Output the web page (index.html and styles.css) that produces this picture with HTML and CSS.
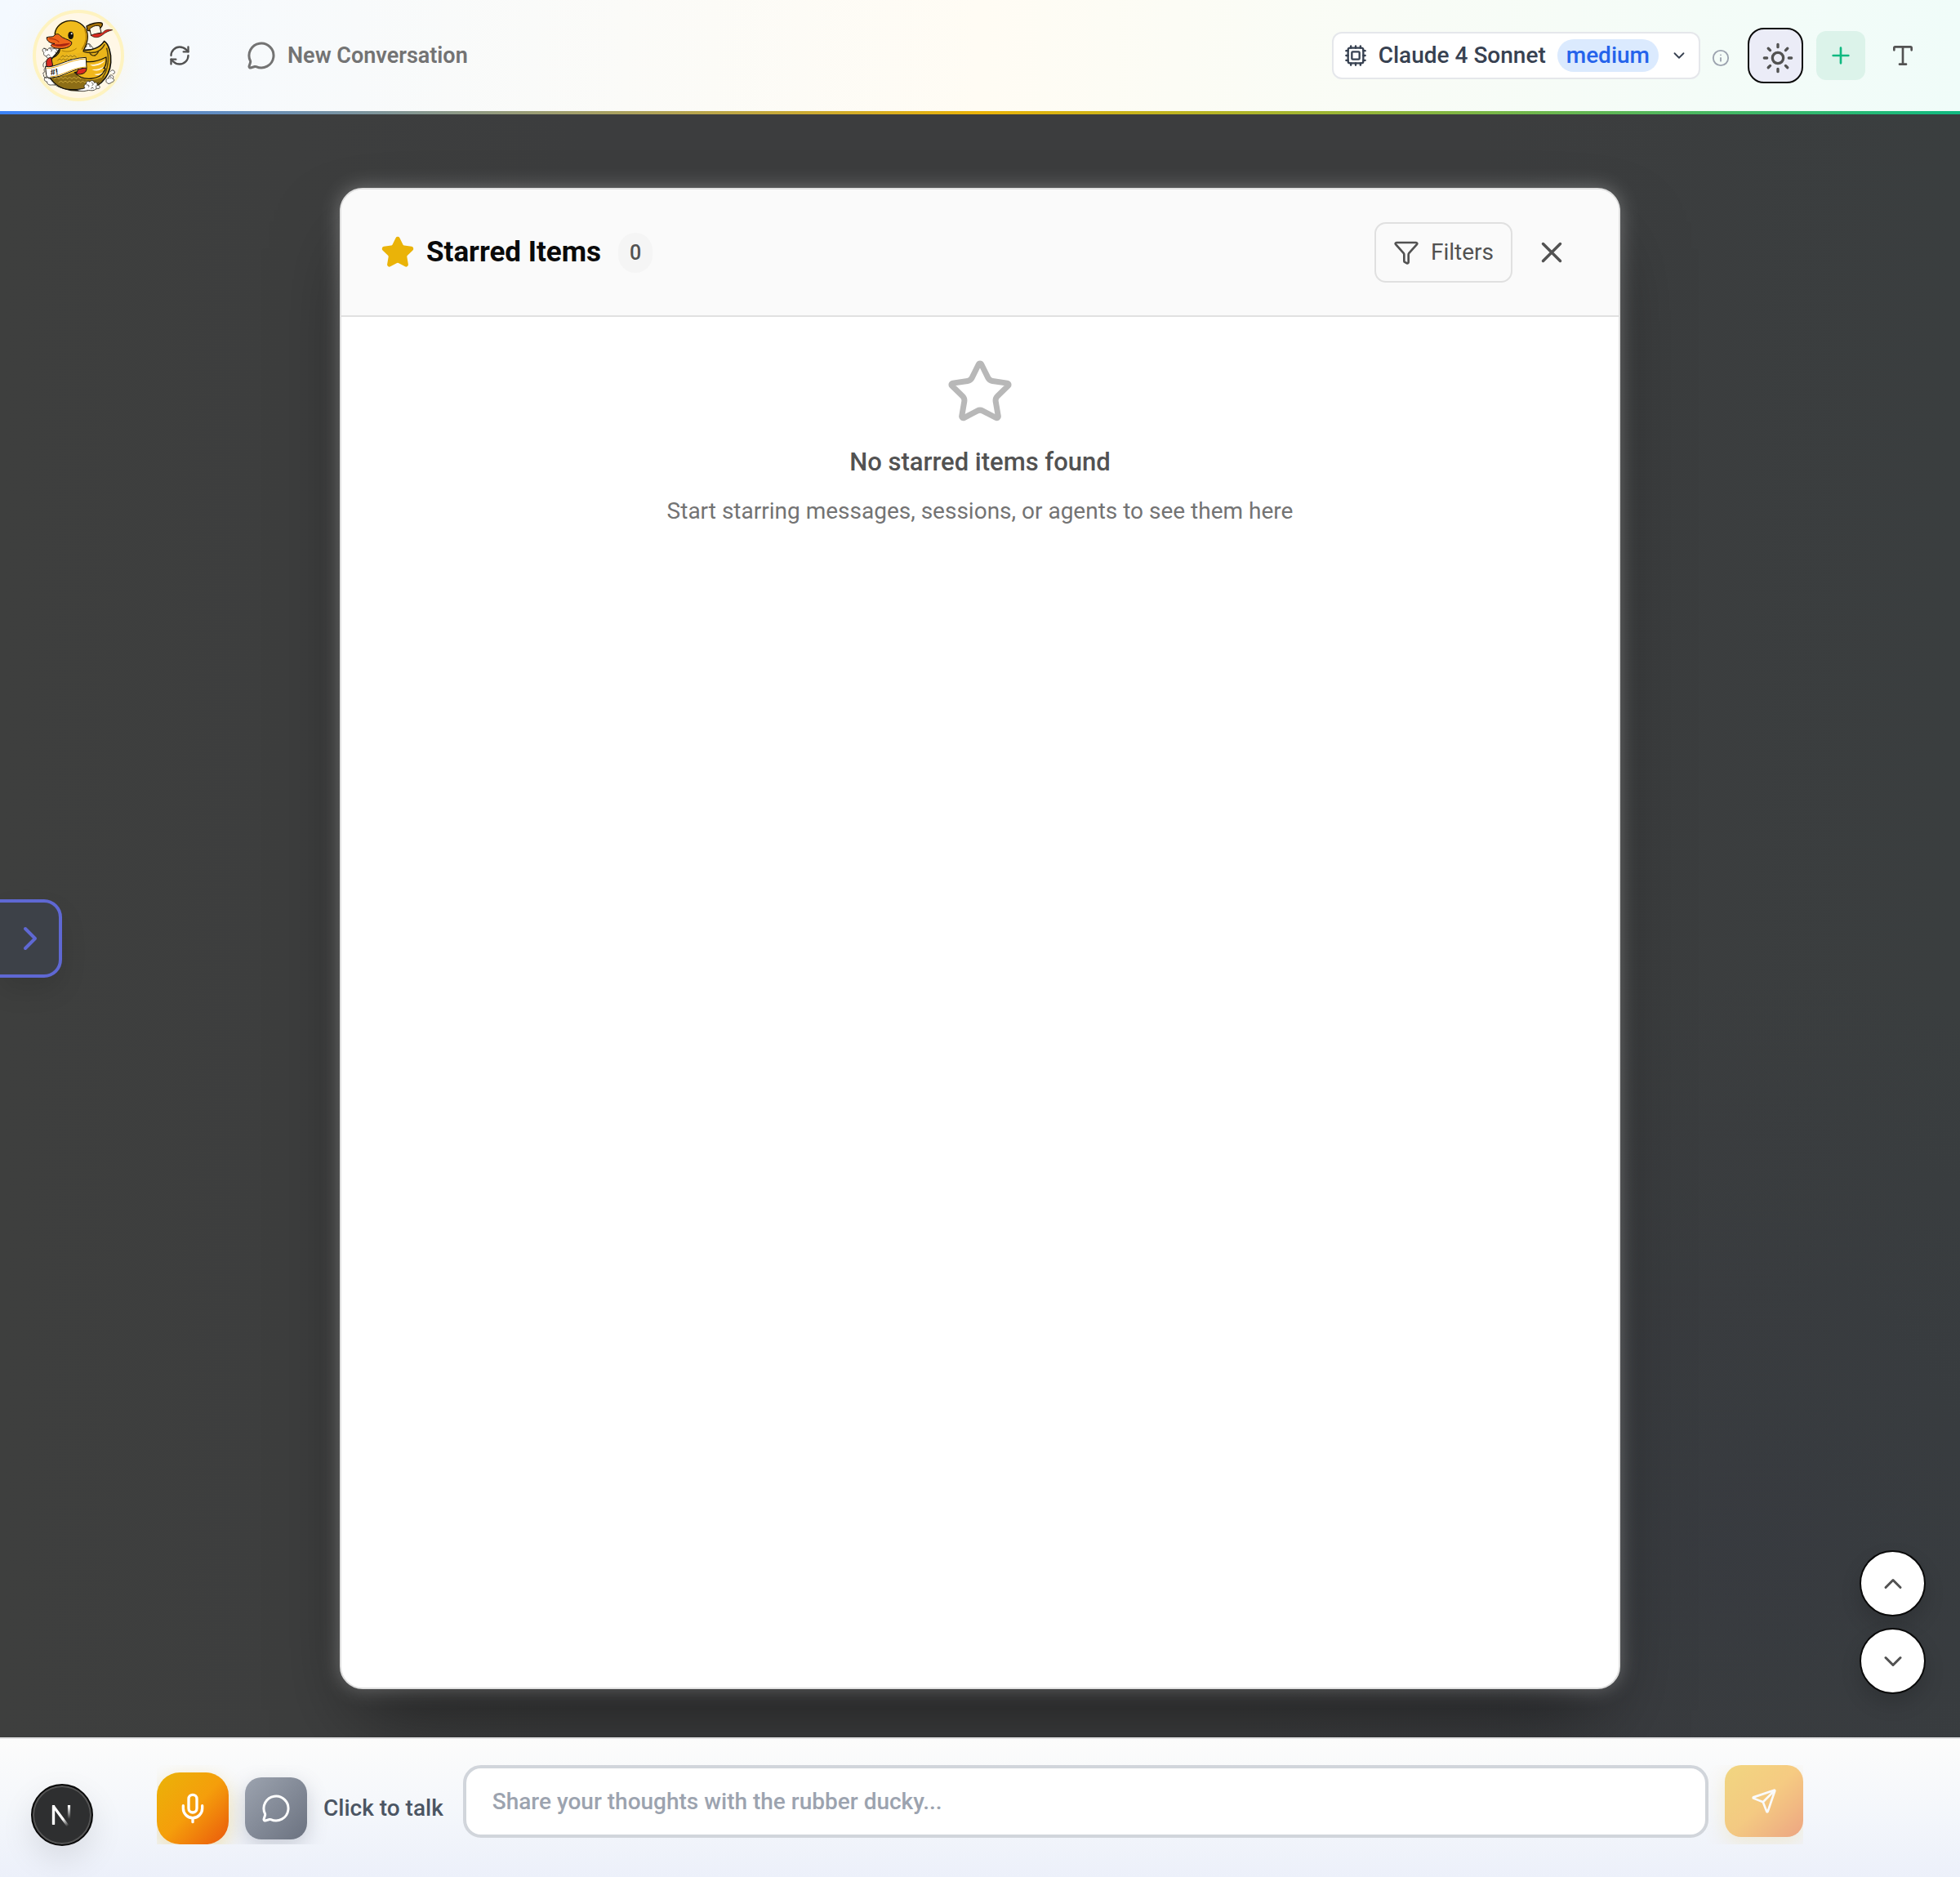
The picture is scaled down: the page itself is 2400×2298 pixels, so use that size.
FILE: index.html
```html
<!DOCTYPE html>
<html lang="en">
<head>
<meta charset="utf-8">
<meta name="viewport" content="width=device-width, initial-scale=1">
<title>Starred Items</title>
<link rel="stylesheet" href="styles.css">
</head>
<body>
<header class="topbar">
  <a class="logo" href="#" aria-label="Home">
    <svg viewBox="42 48 312 312" aria-hidden="true">
      <!-- waves behind the duck -->
      <g fill="#fff" stroke="#2e2a22" stroke-width="2.5" stroke-linecap="round">
        <path d="M102 214c-10 4-22 0-22-8-8 0-12-8-8-13-6-2-8-12-2-15 6-2 12 2 14 8 0-10 14-14 20-6 8-4 18 2 16 10 8 0 12 8 8 14z"/>
        <path d="M72 178c6 0 8 6 5 9m16-8c7 0 9 7 5 10m15 2c5 2 5 8 1 10m-31 4c1-6 9-6 10-1"/>
        <path d="M84 286c-6 2-14-2-14-9m4-13c-6 0-8 8-3 10M100 312c-10 2-18-4-17-12-8 0-13-8-8-15 5-5 13-2 14 4 8-3 15 3 13 10 8-1 14 5 12 12z"/>
        <path d="M76 226c-6 4-10 12-6 20m8 2c-6 2-8 10-4 14"/>
        <path d="M222 182c-4-6 0-12 6-10-2-8 4-14 10-11 6 2 7 8 4 11 6-3 12 2 9 8z"/>
        <path d="M234 162c6 0 8 6 4 8"/>
        <path d="M300 300c-2-8 4-14 10-12-2-8 4-14 10-12 8 2 8 10 3 13 8 0 8 10 0 12-6 2-8 8-16 6z"/>
        <path d="M316 262c4-6 12-6 14 0 4 4 0 10-5 9m-11 9c4 0 6 5 3 8"/>
      </g>
      <!-- streamer -->
      <path d="M228 96c14-8 40-16 54-12 8 2 4 14-6 22-14 12-30 8-44 6z" fill="#a87408" stroke="#1b1405" stroke-width="4"/>
      <path d="M240 106c12-12 26-14 36-10l6 24c-12 2-26 6-36 10z" fill="#fff7e6" stroke="#1b1405" stroke-width="3"/>
      <path d="M245 130c16-12 38-2 46-14 8-8 20-8 32-6-14 4-24 8-36 18-14 12-34 12-42 2z" fill="#dc2a20" stroke="#1b1405" stroke-width="2"/>
      <!-- body and tail -->
      <path d="M128 180C118 206 92 212 85 242c-6 44 34 91 112 91 72 0 116-46 120-104 2-34-8-68-24-78-14 22-40 34-80 34z" fill="#eab51a" stroke="#15130d" stroke-width="5"/>
      <path d="M88 268c30 24 60 8 96-2 18 32 70 36 112 12-16 36-54 55-99 55-58 0-96-28-109-65z" fill="#8c6d16"/>
      <path d="M104 306c48 34 126 24 172-6-22 26-48 33-79 33-40 0-74-9-93-27z" fill="#15130d"/>
      <path d="M110 290q8-12 16 0 8-12 16 0 8-12 16 0 8-12 16 0 8-12 16 0 8-12 16 0 8-12 16 0 8-12 16 0M126 304q8-12 16 0 8-12 16 0 8-12 16 0 8-12 16 0 8-12 16 0 8-12 16 0 8-12 16 0M144 216q7-12 14 0 7-12 14 0 7-12 14 0M128 224q7-12 14 0M152 206q7-10 14 0 7-10 14 0 7-10 14 0" fill="none" stroke="#e9c14a" stroke-width="2"/>
      <path d="M122 222q7-12 14 0 7-12 14 0 7-12 14 0 7-12 14 0M134 210q7-12 14 0 7-12 14 0 7-12 14 0 7-12 14 0" fill="none" stroke="#6e540c" stroke-width="2"/>
      <path d="M218 190c14 4 40 6 54-2-4 10-8 14-16 16m-18-12c4 8 12 14 22 12m34-40c-6 12-14 20-24 24" fill="none" stroke="#4b390a" stroke-width="4"/>
      <path d="M302 178c10 34 6 76-14 104" fill="none" stroke="#5d4a12" stroke-width="5" stroke-dasharray="3 3"/>
      <!-- head -->
      <path d="M130 184c-22-22-28-60-12-84 24-36 82-34 104 2 20 34 8 62-4 86-24 14-60 10-88-4z" fill="#f0bb1c"/>
      <path d="M112 126C112 98 140 76 170 76c34 0 62 26 62 58 0 24-10 38-16 54M130 182c-2 12-10 22-22 28" fill="none" stroke="#15130d" stroke-width="4"/>
      <path d="M222 106c10 26 4 54-10 74" fill="none" stroke="#b98509" stroke-width="6"/>
      <path d="M138 186c20 6 36 4 52-8" fill="none" stroke="#a6780a" stroke-width="3"/>
      <ellipse cx="170" cy="130" rx="10" ry="14" fill="#15130d"/>
      <circle cx="173" cy="124" r="3" fill="#fff"/>
      <!-- beak -->
      <path d="M82 138c8-6 20 0 26-6 6-8 16-10 22-2 10 12 32 14 43 24 4 16-20 26-44 24-18 0-30-4-32-12 4-4 10-4 14-6-16 0-32-10-29-22z" fill="#ee651b" stroke="#15130d" stroke-width="3"/>
      <path d="M98 160c20 8 50-2 70-2-14 16-52 14-68 6z" fill="#a62312"/>
      <path d="M92 142c12 0 26 2 34 12" fill="none" stroke="#b7330d" stroke-width="4"/>
      <!-- wing -->
      <path d="M226 226c24 4 50-4 74-16 2 22-2 34-10 40 8-2 8 4 2 12-14 30-78 40-108 4 22-2 38-20 42-40z" fill="#f0b71c" stroke="#15130d" stroke-width="4"/>
      <path d="M240 238c20 0 40-6 56-17-8 13-26 21-46 21zm8 17c18 1 32-4 46-12-10 14-24 18-38 16zm8 17c12 1 24-2 34-8-10 11-18 14-28 11z" fill="#fff7e6"/>
      <!-- banner -->
      <path d="M80 228c0-10 8-16 18-18l6 32-22 6z" fill="#d92b20" stroke="#15130d" stroke-width="3"/>
      <path d="M228 250c2 16-14 26-38 22 2-8 6-14 8-18z" fill="#d92b20" stroke="#15130d" stroke-width="3"/>
      <path d="M78 244c30 10 80-32 148-33l2 38c-52 2-84 34-128 36-14 2-18-2-20-10z" fill="#fff" stroke="#15130d" stroke-width="3"/>
      <path d="M82 250c38 4 84-32 142-34M96 282c42-2 78-34 130-36" fill="none" stroke="#e9a915" stroke-width="3"/>
      <text x="97" y="277" class="logo-mark" transform="rotate(-8 97 277)">#!</text>
      <!-- waves in front -->
      <path d="M192 331c12-6 20-2 30-8-6-6-2-14 5-14-3-10 8-14 13-8 4-8 16-6 16 3 8-4 14 4 10 10 9-3 14 5 8 11-10 0-12 2-18 6-10 4-18-2-28 2-12 4-24 2-36-2z" fill="#fff" stroke="#2e2a22" stroke-width="2.5"/>
      <path d="M230 312c6-2 9 4 6 7m11-15c6 1 7 8 2 10m12 2c5 1 5 6 1 8m-17 1c1-5 7-5 8-1" fill="none" stroke="#2e2a22" stroke-width="2.5"/>
    </svg>
  </a>
  <button class="icon-btn refresh" type="button" aria-label="Refresh">
    <svg class="i28" viewBox="0 0 24 24"><path d="M3 12a9 9 0 0 1 9-9 9.75 9.75 0 0 1 6.74 2.74L21 8"/><path d="M21 3v5h-5"/><path d="M21 12a9 9 0 0 1-9 9 9.75 9.75 0 0 1-6.74-2.74L3 16"/><path d="M8 16H3v5"/></svg>
  </button>
  <div class="conversation">
    <svg class="i36" viewBox="0 0 24 24"><path d="M2.992 16.342a2 2 0 0 1 .094 1.167l-1.065 3.29a1 1 0 0 0 1.236 1.168l3.413-.998a2 2 0 0 1 1.099.092 10 10 0 1 0-4.777-4.719"/></svg>
    <span>New Conversation</span>
  </div>
  <div class="tools">
    <button class="model" type="button" aria-haspopup="listbox">
      <svg class="i28" viewBox="0 0 24 24"><rect x="4" y="4" width="16" height="16" rx="2"/><rect x="8" y="8" width="8" height="8" rx="1"/><path d="M12 2v2M7 2v2M17 2v2M12 20v2M7 20v2M17 20v2M2 12h2M2 7h2M2 17h2M20 12h2M20 7h2M20 17h2"/></svg>
      <span>Claude 4 Sonnet</span>
      <span class="effort">medium</span>
      <svg class="i22" viewBox="0 0 24 24"><path d="m6 9 6 6 6-6"/></svg>
    </button>
    <svg class="info i22" viewBox="0 0 24 24" role="img" aria-label="Model information"><circle cx="12" cy="12" r="10"/><path d="M12 16v-4M12 8h.01"/></svg>
    <button class="theme" type="button" aria-label="Toggle theme">
      <svg class="i40" viewBox="0 0 24 24"><circle cx="12" cy="12" r="4"/><path d="M12 2v2M12 20v2m-7.07-17.07 1.41 1.41m11.32 11.32 1.41 1.41M2 12h2m16 0h2M6.34 17.66l-1.41 1.41M19.07 4.93l-1.41 1.41"/></svg>
    </button>
    <button class="icon-btn add" type="button" aria-label="New">
      <svg class="i32" viewBox="0 0 24 24"><path d="M5 12h14M12 5v14"/></svg>
    </button>
    <button class="icon-btn" type="button" aria-label="Text size">
      <svg class="i32" viewBox="0 0 24 24"><path d="M12 4v16M4 7V5a1 1 0 0 1 1-1h14a1 1 0 0 1 1 1v2M9 20h6"/></svg>
    </button>
  </div>
</header>

<main class="stage">
  <button class="drawer-tab" type="button" aria-label="Open sidebar">
    <svg class="i48" viewBox="0 0 24 24"><path d="m9 18 6-6-6-6"/></svg>
  </button>

  <section class="dialog" role="dialog" aria-labelledby="dialog-title">
    <div class="dialog-head">
      <svg class="star i42" viewBox="0 0 24 24"><path d="M11.525 2.295a.53.53 0 0 1 .95 0l2.31 4.679a2.123 2.123 0 0 0 1.595 1.16l5.166.756a.53.53 0 0 1 .294.904l-3.736 3.638a2.123 2.123 0 0 0-.611 1.878l.882 5.14a.53.53 0 0 1-.771.56l-4.618-2.428a2.122 2.122 0 0 0-1.973 0L6.396 21.01a.53.53 0 0 1-.77-.56l.881-5.139a2.122 2.122 0 0 0-.611-1.879L2.16 9.795a.53.53 0 0 1 .294-.906l5.165-.755a2.122 2.122 0 0 0 1.597-1.16z"/></svg>
      <h1 id="dialog-title">Starred Items</h1>
      <span class="count">0</span>
      <button class="filters" type="button">
        <svg class="i32" viewBox="0 0 24 24"><path d="M10 20a1 1 0 0 0 .553.895l2 1A1 1 0 0 0 14 21v-7a2 2 0 0 1 .517-1.341L21.74 4.67A1 1 0 0 0 21 3H3a1 1 0 0 0-.742 1.67l7.225 7.989A2 2 0 0 1 10 14z"/></svg>
        Filters
      </button>
      <button class="close" type="button" aria-label="Close">
        <svg class="i42" viewBox="0 0 24 24"><path d="M18 6 6 18M6 6l12 12"/></svg>
      </button>
    </div>
    <div class="empty">
      <svg class="i84" viewBox="0 0 24 24"><path d="M11.525 2.295a.53.53 0 0 1 .95 0l2.31 4.679a2.123 2.123 0 0 0 1.595 1.16l5.166.756a.53.53 0 0 1 .294.904l-3.736 3.638a2.123 2.123 0 0 0-.611 1.878l.882 5.14a.53.53 0 0 1-.771.56l-4.618-2.428a2.122 2.122 0 0 0-1.973 0L6.396 21.01a.53.53 0 0 1-.77-.56l.881-5.139a2.122 2.122 0 0 0-.611-1.879L2.16 9.795a.53.53 0 0 1 .294-.906l5.165-.755a2.122 2.122 0 0 0 1.597-1.16z"/></svg>
      <h2>No starred items found</h2>
      <p>Start starring messages, sessions, or agents to see them here</p>
    </div>
  </section>

  <div class="jump">
    <button type="button" aria-label="Scroll up"><svg class="i36" viewBox="0 0 24 24"><path d="m18 15-6-6-6 6"/></svg></button>
    <button type="button" aria-label="Scroll down"><svg class="i36" viewBox="0 0 24 24"><path d="m6 9 6 6 6-6"/></svg></button>
  </div>
</main>

<footer class="dock">
  <button class="dev-badge" type="button" aria-label="Developer tools">
    <svg viewBox="0 0 40 40">
      <defs>
        <linearGradient id="leg" gradientUnits="userSpaceOnUse" x1="19" y1="21" x2="28" y2="33"><stop offset=".3" stop-color="#fff"/><stop offset="1" stop-color="#fff" stop-opacity="0"/></linearGradient>
        <linearGradient id="post" gradientUnits="userSpaceOnUse" x1="0" y1="9" x2="0" y2="25"><stop stop-color="#fff"/><stop offset="1" stop-color="#fff" stop-opacity="0"/></linearGradient>
      </defs>
      <path d="M9.500 31V9.500L29 36" fill="none" stroke="url(#leg)" stroke-width="3.200"/>
      <path d="M9.500 32V8" fill="none" stroke="#fff" stroke-width="3.200"/>
      <path d="M28.500 8v17" fill="none" stroke="url(#post)" stroke-width="3.200"/>
    </svg>
  </button>
  <form class="composer">
    <div class="voice">
      <button class="mic" type="button" aria-label="Record"><svg class="i40" viewBox="0 0 24 24"><path d="M12 19v3M19 10v2a7 7 0 0 1-14 0v-2"/><rect x="9" y="2" width="6" height="13" rx="3"/></svg></button>
      <button class="chat" type="button" aria-label="Chat mode"><svg class="i36" viewBox="0 0 24 24"><path d="M2.992 16.342a2 2 0 0 1 .094 1.167l-1.065 3.29a1 1 0 0 0 1.236 1.168l3.413-.998a2 2 0 0 1 1.099.092 10 10 0 1 0-4.777-4.719"/></svg></button>
      <span>Click to talk</span>
    </div>
    <div class="entry">
      <input type="text" aria-label="Message" placeholder="Share your thoughts with the rubber ducky...">
      <button class="send" type="button" aria-label="Send"><svg class="i32" viewBox="0 0 24 24"><path d="M14.536 21.686a.5.5 0 0 0 .937-.024l6.5-19a.496.496 0 0 0-.635-.635l-19 6.5a.5.5 0 0 0-.024.937l7.93 3.18a2 2 0 0 1 1.112 1.11zM21.854 2.147l-10.94 10.939"/></svg></button>
    </div>
  </form>
</footer>
</body>
</html>
```
FILE: styles.css
```css
*, *::before, *::after { box-sizing: border-box; }

body {
  margin: 0;
  min-height: 100vh;
  display: flex;
  flex-direction: column;
  font: 500 28px/40px Roboto, "Liberation Sans", sans-serif;
  color: #525252;
  background: #3c3e3f;
}

button {
  display: flex;
  align-items: center;
  justify-content: center;
  margin: 0;
  padding: 0;
  border: 0;
  background: none;
  color: inherit;
  font: inherit;
  flex: none;
}

svg {
  display: block;
  flex: none;
  fill: none;
  stroke: currentColor;
  stroke-width: 2;
  stroke-linecap: round;
  stroke-linejoin: round;
}

.i22 { width: 22px; height: 22px; }
.i28 { width: 28px; height: 28px; }
.i32 { width: 32px; height: 32px; }
.i36 { width: 36px; height: 36px; }
.i40 { width: 40px; height: 40px; }
.i42 { width: 42px; height: 42px; }
.i48 { width: 48px; height: 48px; }
.i84 { width: 84px; height: 84px; }

/* Top bar */
.topbar {
  position: relative;
  display: flex;
  align-items: center;
  height: 140px;
  padding: 0 40px 4px;
  background: linear-gradient(90deg, #f4f9ff, #fffcf4 50%, #f0fcf9);
}

.topbar::after {
  content: "";
  position: absolute;
  inset: auto 0 0;
  height: 4px;
  background: linear-gradient(90deg, #3b82f6, #eab308 50%, #10b981);
}

.logo {
  width: 112px;
  height: 112px;
  flex: none;
  border: 4px solid #fef3c0;
  border-radius: 50%;
  background: #fff7e6;
  box-shadow: 0 8px 40px rgba(254, 243, 192, 0.3);
}

.logo svg { width: 104px; height: 104px; stroke: none; }

.logo-mark {
  font: 700 32px "Liberation Sans", sans-serif;
  fill: #15130d;
}

.icon-btn { width: 60px; height: 60px; border-radius: 12px; }
.refresh { margin-left: 38px; }

.conversation {
  display: flex;
  align-items: center;
  gap: 14px;
  margin-left: 52px;
  font-size: 27px;
  font-weight: 600;
  color: #737373;
}

.tools { display: flex; align-items: center; gap: 16px; margin-left: auto; }

.model {
  gap: 14px;
  height: 58px;
  padding: 0 13px;
  border: 2px solid #e5e7eb;
  border-radius: 12px;
  background: #fff;
  color: #374151;
}

.effort {
  padding: 0 11px;
  border-radius: 20px;
  background: #dbeafe;
  color: #2563eb;
}

.info { margin: 6px 6px 0 -2px; color: #9ca3af; }

.theme {
  width: 68px;
  height: 68px;
  padding: 6px 0 0 6px;
  border: 2px solid #0a0a0a;
  border-radius: 20px;
  background: #ebecf7;
}

.add { background: #dcf3ea; color: #10b981; }

/* Dimmed page behind the dialog */
.stage {
  position: relative;
  flex: 1;
  display: flex;
  justify-content: center;
  padding: 90px 32px 59px;
  overflow: hidden;
  background:
    radial-gradient(circle at 90% 88%, rgba(50, 54, 64, 0.4), transparent 700px),
    linear-gradient(90deg, #3e3f3e, #3c3d3e 30%, #3c3d3e 75%, #3a3e3f);
}

.dialog {
  width: 100%;
  max-width: 1568px;
  border: 2px solid #e0e0e0;
  border-radius: 28px;
  background: #fff;
  box-shadow: 0 0 24px rgba(255, 255, 255, 0.3), 0 50px 100px -24px rgba(0, 0, 0, 0.5);
}

.dialog-head {
  display: flex;
  align-items: center;
  height: 156px;
  padding: 0 48px;
  border-bottom: 2px solid #e0e0e0;
  border-radius: 26px 26px 0 0;
  background: #fafafa;
}

.star { color: #eab308; fill: currentColor; }

h1 { margin: 0 0 0 14px; font-size: 35px; line-height: 48px; font-weight: 700; color: #0a0a0a; }

.count {
  margin-left: 21px;
  padding: 0 14px;
  border-radius: 24px;
  background: #f5f5f5;
  font-size: 25px;
  line-height: 49px;
}

.filters {
  gap: 14px;
  height: 74px;
  margin-left: auto;
  padding: 0 21px;
  border: 2px solid #e0e0e0;
  border-radius: 14px;
  font-weight: 400;
}

.close { width: 68px; height: 68px; margin-left: 14px; }

.empty {
  display: flex;
  flex-direction: column;
  align-items: center;
  padding: 50px 48px;
  text-align: center;
}

.empty svg { color: #b8b8b8; }
h2 { margin: 20px 0 16px; font-size: 31px; line-height: 48px; font-weight: 500; }
.empty p { margin: 0; font-weight: 400; color: #737373; }

/* Floating controls */
.drawer-tab {
  position: absolute;
  left: 0;
  top: 50%;
  width: 76px;
  height: 96px;
  margin-top: -33px;
  padding-left: 2px;
  border: 4px solid #5f68d3;
  border-left: 0;
  border-radius: 0 22px 22px 0;
  background: #3d4148;
  color: #5f68d3;
  box-shadow: 0 16px 32px rgba(0, 0, 0, 0.1);
}

.jump {
  position: absolute;
  right: 42px;
  bottom: 53px;
  display: grid;
  gap: 14px;
}

.jump button {
  width: 81px;
  height: 81px;
  border: 2px solid #0a0a0a;
  border-radius: 50%;
  background: #fff;
  box-shadow: 0 12px 24px rgba(0, 0, 0, 0.15);
}

/* Bottom dock */
.dock {
  position: relative;
  padding: 32px 192px 40px;
  border-top: 2px solid #e2e2e3;
  background: linear-gradient(#fcfcfb, #f3f6fb 60%, #ecf0fa);
}

.dev-badge {
  position: absolute;
  left: 38px;
  bottom: 38px;
  width: 76px;
  height: 76px;
  border: 2px solid #0a0a0a;
  border-radius: 50%;
  background: #2e2f30;
  box-shadow: inset 0 0 0 2px #555, 0 16px 40px rgba(0, 0, 0, 0.1);
}

.dev-badge svg { width: 40px; height: 40px; stroke-linecap: butt; }

.composer {
  display: flex;
  align-items: flex-end;
  gap: 24px;
  overflow: hidden;
}

.voice { display: flex; align-items: center; gap: 20px; color: #4b5563; }

.mic {
  width: 88px;
  height: 88px;
  border-radius: 28px;
  background: linear-gradient(135deg, #eab308, #f59e0b 50%, #ea580c);
  color: #fff;
  box-shadow: 0 8px 24px rgba(234, 179, 8, 0.3);
}

.chat {
  width: 76px;
  height: 76px;
  border-radius: 20px;
  background: linear-gradient(135deg, #9ca3af, #6b7280);
  color: #fff;
  box-shadow: 0 8px 24px rgba(107, 114, 128, 0.3);
}

.entry {
  flex: 1;
  display: flex;
  align-items: flex-start;
  gap: 20px;
  padding-bottom: 8px;
}

.entry input {
  flex: 1;
  min-width: 0;
  height: 89px;
  padding: 0 32px;
  border: 4px solid #d1d5db;
  border-radius: 22px;
  background: #fff;
  color: #374151;
  font: inherit;
}

.entry input::placeholder { color: #9ca3af; opacity: 1; }

.send {
  width: 96px;
  height: 88px;
  border-radius: 20px;
  background: linear-gradient(135deg, #eab308, #f59e0b 50%, #ea580c);
  color: #fff;
  opacity: 0.5;
  box-shadow: 0 8px 24px rgba(234, 179, 8, 0.3);
}
```
